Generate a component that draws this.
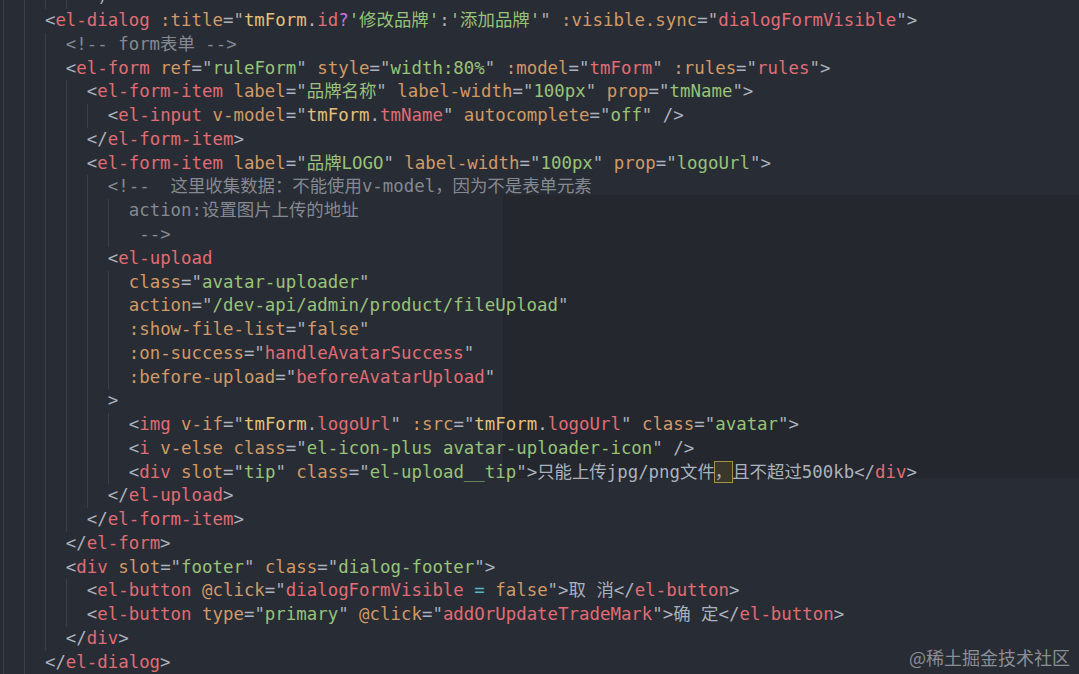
type Tok = [string, string];

const colors: Record<string, string> = {
  p: 'text-[#abb2bf]',
  t: 'text-[#e06c75]',
  a: 'text-[#d19a66]',
  s: 'text-[#98c379]',
  v: 'text-[#e06c75]',
  y: 'text-[#e5c07b]',
  k: 'text-[#c678dd]',
  o: 'text-[#56b6c2]',
  c: 'text-[#858991]',
  h: 'text-[#abb2bf] bg-[#3a382c] outline outline-1 outline-[#a8913e]',
};

// each line: indent (columns) + tokens
const lines: { indent: number; toks: Tok[] }[] = [
  { indent: 9, toks: [['p', ')']] },
  {
    indent: 4,
    toks: [
      ['p', '<'], ['t', 'el-dialog'], ['p', ' '], ['a', ':title'], ['p', '="'], ['y', 'tmForm'], ['p', '.'], ['v', 'id'],
      ['k', '?'], ['s', "'修改品牌'"], ['p', ':'], ['s', "'添加品牌'"], ['p', '" '], ['a', ':visible.sync'], ['p', '="'],
      ['v', 'dialogFormVisible'], ['p', '">'],
    ],
  },
  { indent: 6, toks: [['c', '<!-- form表单 -->']] },
  {
    indent: 6,
    toks: [
      ['p', '<'], ['t', 'el-form'], ['p', ' '], ['a', 'ref'], ['p', '="'], ['s', 'ruleForm'], ['p', '" '], ['a', 'style'],
      ['p', '="'], ['s', 'width:80%'], ['p', '" '], ['a', ':model'], ['p', '="'], ['v', 'tmForm'], ['p', '" '],
      ['a', ':rules'], ['p', '="'], ['v', 'rules'], ['p', '">'],
    ],
  },
  {
    indent: 8,
    toks: [
      ['p', '<'], ['t', 'el-form-item'], ['p', ' '], ['a', 'label'], ['p', '="'], ['s', '品牌名称'], ['p', '" '],
      ['a', 'label-width'], ['p', '="'], ['s', '100px'], ['p', '" '], ['a', 'prop'], ['p', '="'], ['s', 'tmName'], ['p', '">'],
    ],
  },
  {
    indent: 10,
    toks: [
      ['p', '<'], ['t', 'el-input'], ['p', ' '], ['a', 'v-model'], ['p', '="'], ['y', 'tmForm'], ['p', '.'], ['v', 'tmName'],
      ['p', '" '], ['a', 'autocomplete'], ['p', '="'], ['s', 'off'], ['p', '" />'],
    ],
  },
  { indent: 8, toks: [['p', '</'], ['t', 'el-form-item'], ['p', '>']] },
  {
    indent: 8,
    toks: [
      ['p', '<'], ['t', 'el-form-item'], ['p', ' '], ['a', 'label'], ['p', '="'], ['s', '品牌LOGO'], ['p', '" '],
      ['a', 'label-width'], ['p', '="'], ['s', '100px'], ['p', '" '], ['a', 'prop'], ['p', '="'], ['s', 'logoUrl'], ['p', '">'],
    ],
  },
  { indent: 10, toks: [['c', '<!--  这里收集数据：不能使用v-model，因为不是表单元素']] },
  { indent: 12, toks: [['c', 'action:设置图片上传的地址']] },
  { indent: 13, toks: [['c', '-->']] },
  { indent: 10, toks: [['p', '<'], ['t', 'el-upload']] },
  { indent: 12, toks: [['a', 'class'], ['p', '="'], ['s', 'avatar-uploader'], ['p', '"']] },
  { indent: 12, toks: [['a', 'action'], ['p', '="'], ['s', '/dev-api/admin/product/fileUpload'], ['p', '"']] },
  { indent: 12, toks: [['a', ':show-file-list'], ['p', '="'], ['a', 'false'], ['p', '"']] },
  { indent: 12, toks: [['a', ':on-success'], ['p', '="'], ['v', 'handleAvatarSuccess'], ['p', '"']] },
  { indent: 12, toks: [['a', ':before-upload'], ['p', '="'], ['v', 'beforeAvatarUpload'], ['p', '"']] },
  { indent: 10, toks: [['p', '>']] },
  {
    indent: 12,
    toks: [
      ['p', '<'], ['t', 'img'], ['p', ' '], ['a', 'v-if'], ['p', '="'], ['y', 'tmForm'], ['p', '.'], ['v', 'logoUrl'],
      ['p', '" '], ['a', ':src'], ['p', '="'], ['y', 'tmForm'], ['p', '.'], ['v', 'logoUrl'], ['p', '" '], ['a', 'class'],
      ['p', '="'], ['s', 'avatar'], ['p', '">'],
    ],
  },
  {
    indent: 12,
    toks: [
      ['p', '<'], ['t', 'i'], ['p', ' '], ['a', 'v-else'], ['p', ' '], ['a', 'class'], ['p', '="'],
      ['s', 'el-icon-plus avatar-uploader-icon'], ['p', '" />'],
    ],
  },
  {
    indent: 12,
    toks: [
      ['p', '<'], ['t', 'div'], ['p', ' '], ['a', 'slot'], ['p', '="'], ['s', 'tip'], ['p', '" '], ['a', 'class'], ['p', '="'],
      ['s', 'el-upload__tip'], ['p', '">只能上传jpg/png文件'], ['h', '，'], ['p', '且不超过500kb</'], ['t', 'div'], ['p', '>'],
    ],
  },
  { indent: 10, toks: [['p', '</'], ['t', 'el-upload'], ['p', '>']] },
  { indent: 8, toks: [['p', '</'], ['t', 'el-form-item'], ['p', '>']] },
  { indent: 6, toks: [['p', '</'], ['t', 'el-form'], ['p', '>']] },
  {
    indent: 6,
    toks: [
      ['p', '<'], ['t', 'div'], ['p', ' '], ['a', 'slot'], ['p', '="'], ['s', 'footer'], ['p', '" '], ['a', 'class'],
      ['p', '="'], ['s', 'dialog-footer'], ['p', '">'],
    ],
  },
  {
    indent: 8,
    toks: [
      ['p', '<'], ['t', 'el-button'], ['p', ' '], ['a', '@click'], ['p', '="'], ['v', 'dialogFormVisible'], ['p', ' '],
      ['o', '='], ['p', ' '], ['a', 'false'], ['p', '">取 消</'], ['t', 'el-button'], ['p', '>'],
    ],
  },
  {
    indent: 8,
    toks: [
      ['p', '<'], ['t', 'el-button'], ['p', ' '], ['a', 'type'], ['p', '="'], ['s', 'primary'], ['p', '" '], ['a', '@click'],
      ['p', '="'], ['v', 'addOrUpdateTradeMark'], ['p', '">确 定</'], ['t', 'el-button'], ['p', '>'],
    ],
  },
  { indent: 6, toks: [['p', '</'], ['t', 'div'], ['p', '>']] },
  { indent: 4, toks: [['p', '</'], ['t', 'el-dialog'], ['p', '>']] },
];

const Indent = ({ n }: { n: number }) => {
  const units = Math.floor(n / 2);
  const rest = n % 2;
  return (
    <>
      {Array.from({ length: units }).map((_, i) => (
        <span key={i} className="inline-block h-[23.78px] align-top shadow-[inset_1px_0_0_#3b3f46]">
          {'  '}
        </span>
      ))}
      {rest ? ' ' : null}
    </>
  );
};

export default function App() {
  return (
    <div className="relative w-[1079px] h-[674px] overflow-hidden bg-[#282c34]">
      {/* faded window left behind in the capture */}
      <div className="absolute left-[503px] top-[195px] w-[576px] h-[283px] bg-[#24272d]" />

      <div
        className="relative mt-[-14.7px] pl-[3px] text-[17.4px] leading-[23.78px] whitespace-pre"
        style={{ fontFamily: '"DejaVu Sans Mono", "Noto Sans CJK SC", monospace' }}
      >
        {lines.map((ln, i) => (
          <div key={i} className="h-[23.78px]">
            <Indent n={ln.indent} />
            {ln.toks.map(([c, text], j) => (
              <span key={j} className={colors[c]}>
                {text}
              </span>
            ))}
          </div>
        ))}
      </div>

      <div
        className="absolute right-[9px] bottom-[5px] text-[18px] leading-[24px] text-[#8b8e93]"
        style={{ fontFamily: '"Noto Sans CJK SC", sans-serif' }}
      >
        @稀土掘金技术社区
      </div>
    </div>
  );
}
